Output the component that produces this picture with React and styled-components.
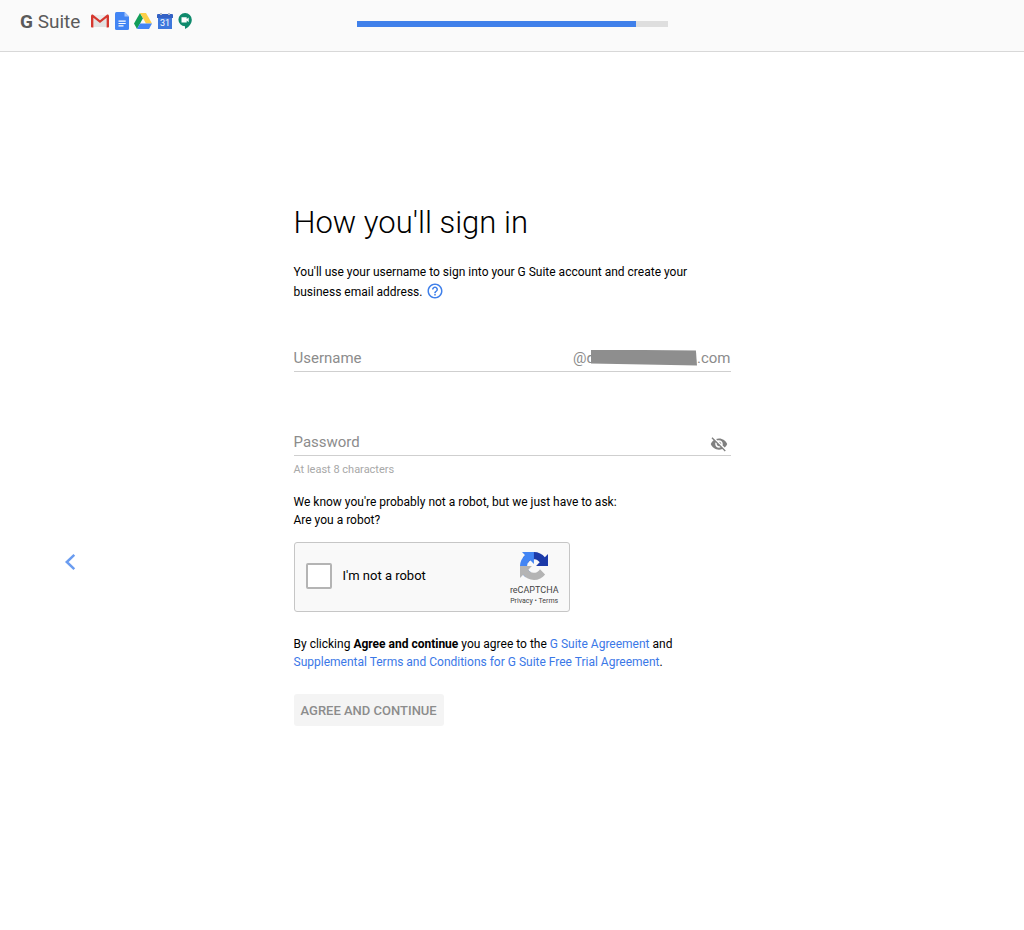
import React, { useState } from "react";
import styled, { createGlobalStyle } from "styled-components";
import { MdHelpOutline, MdVisibility, MdVisibilityOff } from "react-icons/md";

const GlobalStyle = createGlobalStyle`
  * {
    box-sizing: border-box;
  }
  body {
    margin: 0;
    background: #fff;
    color: #000;
    font-family: Roboto, "Liberation Sans", sans-serif;
    font-size: 12px;
  }
  input, button {
    font-family: inherit;
  }
`;

const Header = styled.header`
  display: grid;
  grid-template-columns: 1fr minmax(100px, 311px) 1fr;
  height: 52px;
  padding: 0 20px;
  background: #fafafa;
  border-bottom: 1px solid #d8d8d8;
`;

const Brand = styled.div`
  display: flex;
  align-items: flex-start;
  gap: 10px;
  padding-top: 10px;
`;

const Wordmark = styled.span`
  font-family: Roboto, sans-serif;
  font-size: 19px;
  line-height: 24px;
  color: #5a5a5a;
  white-space: nowrap;
`;

const WordmarkG = styled.span`
  font-weight: 700;
`;

const Apps = styled.div`
  display: flex;
  align-items: center;
  gap: 5px;
  height: 22px;
`;

const Progress = styled.div`
  display: flex;
  height: 6px;
  margin-top: 21px;
  background: #dedede;
`;

const ProgressFill = styled.div`
  background: #4080ea;
`;

const Main = styled.main`
  display: grid;
  grid-template-columns: 1fr minmax(0, 437px) 1fr;
`;

const Side = styled.nav`
  padding: 501px 0 0 64px;
`;

const BackButton = styled.button`
  display: block;
  padding: 0;
  border: 0;
  background: none;
  line-height: 0;
  cursor: pointer;
`;

const Form = styled.form`
  padding-top: 149px;
`;

const Title = styled.h1`
  margin: 0 0 17px;
  font-size: 31px;
  font-weight: 300;
  line-height: 44px;
`;

const Text = styled.p`
  margin: 0;
  line-height: ${(props) => (props.$loose ? "20px" : "18px")};
`;

const HelpButton = styled.button`
  padding: 0;
  margin-left: 1px;
  border: 0;
  background: none;
  color: #4080ea;
  font-size: 18px;
  line-height: 0;
  vertical-align: top;
  cursor: pointer;
`;

const Field = styled.div`
  display: flex;
  align-items: center;
  height: 28px;
  margin-top: ${(props) => props.$top};
  border-bottom: 1px solid #cfcfcf;
`;

const Input = styled.input`
  flex: 1;
  min-width: 0;
  padding: 0;
  border: 0;
  outline: 0;
  background: none;
  font-size: 15px;
  line-height: 20px;
  &::placeholder {
    color: #8c8c8c;
    opacity: 1;
  }
`;

const Domain = styled.span`
  display: flex;
  align-items: center;
  font-size: 15px;
  color: #8c8c8c;
`;

const Redacted = styled.span`
  width: 106px;
  height: 16px;
  margin-left: -4px;
  background: #8e8e8e;
  clip-path: polygon(0 0, 99% 6%, 100% 100%, 0 88%);
`;

const EyeButton = styled.button`
  align-self: flex-end;
  padding: 0;
  margin: 0 3px 2px 0;
  border: 0;
  background: none;
  color: #808080;
  font-size: 18px;
  line-height: 0;
  cursor: pointer;
`;

const Hint = styled.p`
  margin: 4px 0 13px;
  font-size: 11px;
  line-height: 20px;
  color: #a8a8a8;
`;

const Captcha = styled.div`
  display: flex;
  align-items: flex-start;
  width: 276px;
  max-width: 100%;
  height: 70px;
  margin: 13px 0 23px;
  padding: 0 10px 0 11px;
  background: #f9f9f9;
  border: 1px solid #c6c6c6;
  border-radius: 3px;
`;

const Checkbox = styled.input`
  appearance: none;
  width: 26px;
  height: 26px;
  margin: 20px 11px 0 0;
  background: #fff;
  border: 2px solid #b4b4b4;
  border-radius: 2px;
  &:checked {
    background: #4080ea;
  }
`;

const CaptchaLabel = styled.label`
  flex: 1;
  padding-top: 20px;
  font-size: 13px;
  line-height: 26px;
`;

const CaptchaBrand = styled.div`
  display: flex;
  flex-direction: column;
  align-items: center;
  padding-top: 9px;
  font-size: 9px;
  line-height: 10px;
  color: #444;
`;

const CaptchaName = styled.span`
  margin-top: 5px;
`;

const CaptchaLinks = styled.div`
  margin-top: 1px;
  font-size: 7px;
  a {
    color: inherit;
    text-decoration: none;
  }
`;

const Link = styled.a`
  color: #3b78e7;
  text-decoration: none;
`;

const Submit = styled.button`
  height: 32px;
  margin-top: 23px;
  padding: 0 7px;
  border: 0;
  border-radius: 3px;
  background: #f4f4f4;
  color: #8c8c8c;
  font-size: 13px;
  font-weight: 500;
`;

const BackIcon = () => (
  <svg width="12" height="18" viewBox="0 0 12 18" fill="none" stroke="#6a9cf0" strokeWidth="2.500">
    <path d="M10.300 1.800L2.800 9l7.500 7.200" />
  </svg>
);

const GmailIcon = () => (
  <svg width="20" height="16" viewBox="0 0 20 16">
    <path d="M2 2h16v12H2z" fill="#ececec" />
    <path d="M4 4l6 5 6-5v10H4z" fill="#e2e2e2" />
    <path d="M1 3.200v10.300c0 .6.500 1 1 1h1.400V4.800L10 10l6.600-5.200v9.700H18c.6 0 1-.4 1-1V3.200C19 1.700 17.600 1.200 16.600 2L10 7.200 3.400 2C2.400 1.200 1 1.700 1 3.200z" fill="#d5382f" />
  </svg>
);

const DocsIcon = () => (
  <svg width="14" height="18" viewBox="0 0 14 18">
    <path d="M1.500 0H9.500L14 4.500V16.500Q14 18 12.500 18H1.500Q0 18 0 16.500V1.500Q0 0 1.500 0z" fill="#4285f4" />
    <path d="M9.500 0L14 4.500H9.500z" fill="#a6c5fa" />
    <path d="M3.500 8.500h7.200v1.200H3.500zM3.500 10.900h7.200v1.200H3.500zM3.500 13.300h5v1.200h-5z" fill="#fff" />
  </svg>
);

const DriveIcon = () => (
  <svg width="18" height="16" viewBox="0 0 18 16">
    <path d="M6 0L0 10.500 3 16 9 5.300z" fill="#119d59" />
    <path d="M6 0h6l6 10.500h-6z" fill="#fdcf48" />
    <path d="M6 10.500h12L15 16H3z" fill="#4285f4" />
  </svg>
);

const CalendarIcon = () => (
  <svg width="16" height="16" viewBox="0 0 16 16">
    <path d="M1 4h14v12H1z" fill="#3f78dc" />
    <path d="M1 1h14q1 0 1 1v3H0V2q0-1 1-1z" fill="#3361c4" />
    <path d="M3 0h2v2H3zM11 0h2v2h-2z" fill="#b5bdcc" />
    <text x="8" y="13" textAnchor="middle" fontFamily="Roboto, sans-serif" fontSize="9" fill="#fff">
      31
    </text>
  </svg>
);

const MeetIcon = () => (
  <svg width="14" height="16" viewBox="0 0 14 16">
    <path d="M7 0a6.600 6.600 0 0 0 0 13.200V16c3.600-1.700 6.800-5 6.800-9.200A6.700 6.700 0 0 0 7 0z" fill="#0f8a6c" />
    <path d="M3.500 4.200h5.200v1.900l2-1.700v4.800l-2-1.700v1.900H3.500z" fill="#fff" />
  </svg>
);

const RecaptchaIcon = () => (
  <svg width="28" height="28" viewBox="0 0 64 64">
    <path fill="#1c3aa9" d="M64 31.955l-.033-1.370V4.687l-7.160 7.160C50.948 4.674 42.033.093 32.050.093c-10.400 0-19.622 4.960-25.458 12.640l11.736 11.860a15.550 15.550 0 0 1 4.754-5.334c2.050-1.600 4.952-2.906 8.968-2.906.485 0 .860.057 1.135.163 4.976.393 9.288 3.140 11.828 7.124l-8.307 8.307L64 31.953" />
    <path fill="#4285f4" d="M31.862.094l-1.370.033H4.594l7.160 7.160C4.580 13.147 0 22.060 0 32.046c0 10.400 4.960 19.622 12.640 25.458L24.500 45.768a15.550 15.550 0 0 1-5.334-4.754c-1.600-2.050-2.906-4.952-2.906-8.968 0-.485.057-.860.163-1.135.393-4.976 3.140-9.288 7.124-11.828l8.307 8.307L31.860.095" />
    <path fill="#b4b4b4" d="M.001 32.045l.033 1.370v25.898l7.160-7.160c5.860 7.173 14.774 11.754 24.760 11.754 10.400 0 19.622-4.960 25.458-12.640l-11.736-11.860a15.550 15.550 0 0 1-4.754 5.334c-2.050 1.600-4.952 2.906-8.968 2.906-.485 0-.860-.057-1.135-.163-4.976-.393-9.288-3.140-11.828-7.124l8.307-8.307c-10.522.040-22.400.066-27.295-.005" />
  </svg>
);

export default () => {
  const [username, setUsername] = useState("");
  const [password, setPassword] = useState("");
  const [visible, setVisible] = useState(false);
  const [human, setHuman] = useState(false);

  return (
    <>
      <GlobalStyle />
      <Header>
        <Brand>
          <Wordmark>
            <WordmarkG>G</WordmarkG> Suite
          </Wordmark>
          <Apps>
            <GmailIcon />
            <DocsIcon />
            <DriveIcon />
            <CalendarIcon />
            <MeetIcon />
          </Apps>
        </Brand>
        <Progress role="progressbar" aria-valuenow={90} aria-label="Setup progress">
          <ProgressFill style={{ width: "90%" }} />
        </Progress>
      </Header>

      <Main>
        <Side>
          <BackButton type="button" aria-label="Back">
            <BackIcon />
          </BackButton>
        </Side>

        <Form onSubmit={(e) => e.preventDefault()}>
          <Title>How you'll sign in</Title>
          <Text $loose>
            You'll use your username to sign into your G Suite account and create your business email address.{" "}
            <HelpButton type="button" aria-label="Help">
              <MdHelpOutline />
            </HelpButton>
          </Text>

          <Field $top="42px">
            <Input aria-label="Username" placeholder="Username" value={username} onChange={(e) => setUsername(e.target.value)} />
            <Domain>
              @d
              <Redacted />
              .com
            </Domain>
          </Field>

          <Field $top="56px">
            <Input
              aria-label="Password"
              placeholder="Password"
              type={visible ? "text" : "password"}
              value={password}
              onChange={(e) => setPassword(e.target.value)}
            />
            <EyeButton type="button" aria-label="Show password" onClick={() => setVisible(!visible)}>
              {visible ? <MdVisibility /> : <MdVisibilityOff />}
            </EyeButton>
          </Field>
          <Hint>At least 8 characters</Hint>

          <Text>
            We know you're probably not a robot, but we just have to ask:
            <br />
            Are you a robot?
          </Text>

          <Captcha>
            <Checkbox id="robot" type="checkbox" checked={human} onChange={(e) => setHuman(e.target.checked)} />
            <CaptchaLabel htmlFor="robot">I'm not a robot</CaptchaLabel>
            <CaptchaBrand>
              <RecaptchaIcon />
              <CaptchaName>reCAPTCHA</CaptchaName>
              <CaptchaLinks>
                <a href="#privacy">Privacy</a> • <a href="#terms">Terms</a>
              </CaptchaLinks>
            </CaptchaBrand>
          </Captcha>

          <Text>
            By clicking <b>Agree and continue</b> you agree to the <Link href="#agreement">G Suite Agreement</Link> and{" "}
            <Link href="#supplemental">Supplemental Terms and Conditions for G Suite Free Trial Agreement</Link>.
          </Text>

          <Submit type="submit" disabled={!human}>
            AGREE AND CONTINUE
          </Submit>
        </Form>
      </Main>
    </>
  );
};
